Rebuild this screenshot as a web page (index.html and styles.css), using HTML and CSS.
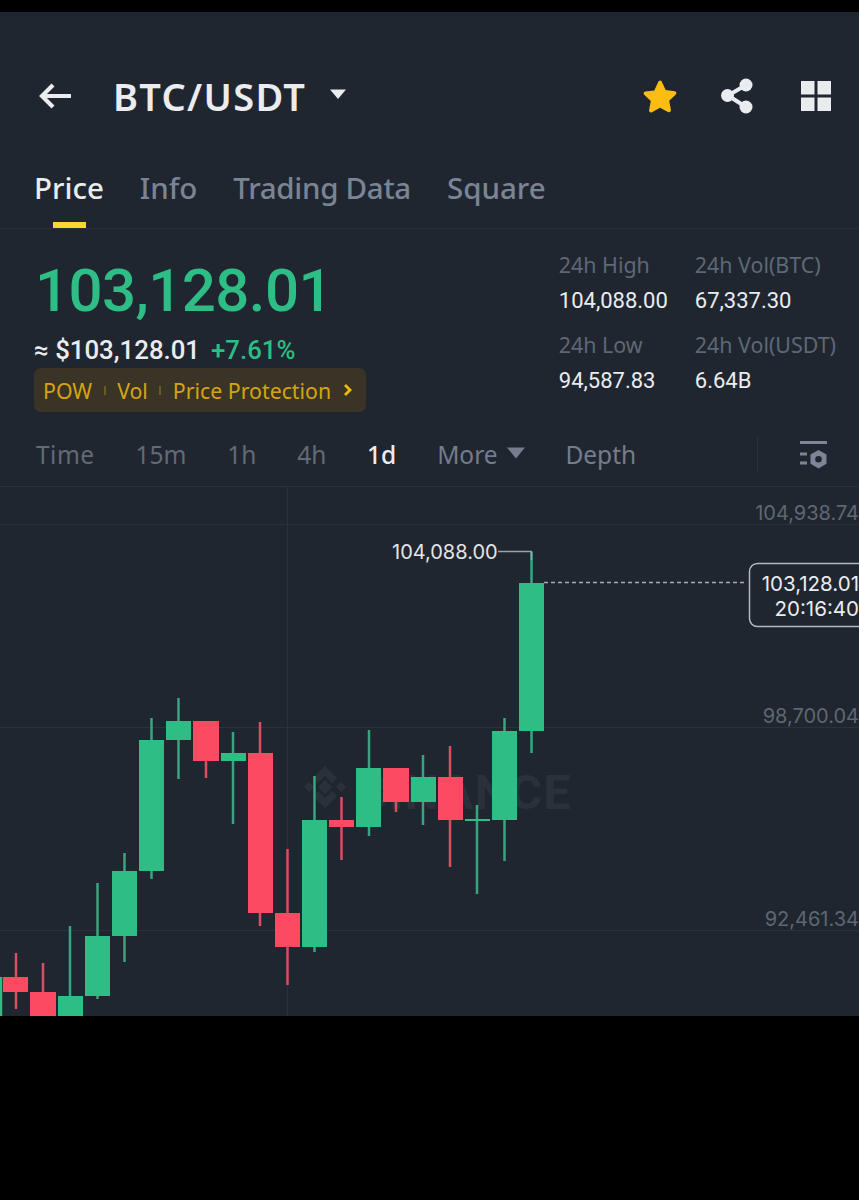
FILE: index.html
```html
<!DOCTYPE html>
<html lang="en">
<head>
  <meta charset="UTF-8">
  <meta name="viewport" content="width=device-width, initial-scale=1.0">
  <title>BTC/USDT</title>
  <link rel="stylesheet" href="styles.css">
</head>
<body>
  <div class="screen">
    <header class="topbar">
      <svg class="back-icon" viewBox="0 0 36 28"><path d="M33 14H5M15 3 4 14l11 11" fill="none" stroke="currentColor" stroke-width="4.2"/></svg>
      <span class="pair">BTC/USDT</span>
      <svg class="pair-caret" viewBox="0 0 18 12"><path d="M1 1.500h16L9 11z" fill="currentColor"/></svg>
      <div class="topbar-icons">
        <svg class="star-icon" viewBox="0 0 36 36"><path d="M18 2.500c.9 0 1.400.5 1.800 1.300l3.900 8.300 9 1.200c1.700.2 2.300 2 1.100 3.200l-6.600 6.300 1.700 9c.3 1.700-1.400 2.900-2.900 2.100L18 29.800l-8 4.400c-1.500.8-3.200-.4-2.900-2.100l1.700-9-6.600-6.300c-1.200-1.200-.6-3 1.100-3.200l9-1.200 3.900-8.300c.4-.8.900-1.300 1.800-1.300z" fill="currentColor"/></svg>
        <svg class="share-icon" viewBox="0 0 34 36"><path d="M26 7 8 17.500 26 29" fill="none" stroke="currentColor" stroke-width="4"/><circle cx="26" cy="7" r="6.500" fill="currentColor"/><circle cx="7.500" cy="17.500" r="6.500" fill="currentColor"/><circle cx="26" cy="29" r="6.500" fill="currentColor"/></svg>
        <svg class="grid-icon" viewBox="0 0 32 32"><path d="M1 1h13.500v13.500H1zM17.500 1H31v13.500H17.500zM1 17.500h13.500V31H1zM17.500 17.500H31V31H17.500z" fill="currentColor"/></svg>
      </div>
    </header>

    <nav class="tabs">
      <span class="tab tab-active">Price</span>
      <span class="tab">Info</span>
      <span class="tab tab-long">Trading Data</span>
      <span class="tab">Square</span>
    </nav>

    <section class="summary">
      <div class="summary-left">
        <div class="last-price">103,128.01</div>
        <div class="fiat-row">
          <span class="fiat">≈ $103,128.01</span>
          <span class="change">+7.61%</span>
        </div>
        <div class="tags">
          <span>POW</span>
          <i class="tag-sep"></i>
          <span>Vol</span>
          <i class="tag-sep"></i>
          <span>Price Protection</span>
          <svg class="tag-arrow" viewBox="0 0 10 14"><path d="M2 2l5 5-5 5" fill="none" stroke="currentColor" stroke-width="2.800"/></svg>
        </div>
      </div>
      <div class="stats">
        <div class="stat"><span class="stat-label">24h High</span><span class="stat-value">104,088.00</span></div>
        <div class="stat"><span class="stat-label">24h Vol(BTC)</span><span class="stat-value">67,337.30</span></div>
        <div class="stat"><span class="stat-label">24h Low</span><span class="stat-value">94,587.83</span></div>
        <div class="stat"><span class="stat-label">24h Vol(USDT)</span><span class="stat-value">6.64B</span></div>
      </div>
    </section>

    <div class="intervals">
      <span class="interval interval-time">Time</span>
      <span class="interval">15m</span>
      <span class="interval">1h</span>
      <span class="interval">4h</span>
      <span class="interval interval-active">1d</span>
      <span class="interval interval-more">More <svg class="more-caret" viewBox="0 0 18 12"><path d="M0 .5h18L9 11.500z" fill="currentColor"/></svg></span>
      <span class="interval interval-more">Depth</span>
      <i class="interval-sep"></i>
      <svg class="settings-icon" viewBox="0 0 30 30"><path d="M1 1.500h27M1 13h7M1 22h7" fill="none" stroke="currentColor" stroke-width="3.200"/><path d="M19.500 9l8 4.600v9.200l-8 4.600-8-4.600v-9.200z" fill="currentColor"/><circle cx="19.500" cy="18.200" r="3.300" fill="#1f2630"/></svg>
    </div>

    <div class="chart">
      <!-- viewBox keeps the screenshot's y values, so candles read as page coordinates -->
      <svg class="chart-svg" viewBox="0 487 859 529">
        <g class="grid-lines">
          <path d="M0 524.500H859M0 727.500H859M0 930.500H859M287.500 487V1016"/>
        </g>
        <g class="watermark">
          <path d="M325 766l12 12-5 5-7-7-7 7-5-5zM304 787l5-5 5 5-5 5zM346 787l-5-5-5 5 5 5zM325 780l7 7-7 7-7-7zM325 808l-12-12 5-5 7 7 7-7 5 5z"/>
          <text x="357" y="809" class="watermark-text">BINANCE</text>
        </g>

        <g class="wicks-up">
          <path d="M1 977V1016M70 926V1016M97.500 883V999M124.500 853V962M151.500 718V879M178.500 698V779M233 732V824M314.500 776V952M369 730V836M423 755V825M477 805V894M504.500 718V861M531.500 552V753"/>
        </g>
        <g class="wicks-down">
          <path d="M16 953V1009M43 963V1016M206 721V778M260 722V926M287.500 849V985M341.500 797V860M396 768V812M450 746V867"/>
        </g>
        <g class="bodies-up">
          <rect x="-11" y="977" width="13" height="39"/>
          <rect x="58" y="996" width="25" height="20"/>
          <rect x="85" y="936" width="25" height="60"/>
          <rect x="112" y="871" width="25" height="65"/>
          <rect x="139" y="740" width="25" height="131"/>
          <rect x="166" y="721" width="25" height="19"/>
          <rect x="221" y="753" width="25" height="8"/>
          <rect x="302" y="820" width="25" height="127"/>
          <rect x="356" y="768" width="25" height="59"/>
          <rect x="411" y="777" width="25" height="25"/>
          <rect x="465" y="819" width="25" height="2"/>
          <rect x="492" y="731" width="25" height="89"/>
          <rect x="519" y="583" width="25" height="148"/>
        </g>
        <g class="bodies-down">
          <rect x="3" y="977" width="25" height="15"/>
          <rect x="30" y="992" width="26" height="24"/>
          <rect x="193" y="721" width="26" height="40"/>
          <rect x="248" y="753" width="25" height="160"/>
          <rect x="275" y="913" width="25" height="34"/>
          <rect x="329" y="820" width="25" height="7"/>
          <rect x="383" y="768" width="26" height="34"/>
          <rect x="438" y="777" width="25" height="43"/>
        </g>

        <path class="high-leader" d="M498 551.500H531.500V560"/>
        <path class="last-line" d="M544 582.500H745"/>
        <text x="392" y="559" class="high-label">104,088.00</text>

        <text x="859" y="520" class="axis-label">104,938.74</text>
        <text x="859" y="723" class="axis-label">98,700.04</text>
        <text x="859" y="926" class="axis-label">92,461.34</text>

        <rect class="price-tag" x="749.500" y="563.500" width="130" height="63" rx="8"/>
        <text x="859" y="591" class="tag-label">103,128.01</text>
        <text x="859" y="616" class="tag-label">20:16:40</text>
      </svg>
    </div>
  </div>
</body>
</html>
```

FILE: styles.css
```css
:root {
  --fundo: #1f2630;
  --linha: #2b323c;
  --branco: #eaecef;
  --verde: #2ebd85;
  --amarelo: #f0b90b;
}
* { box-sizing: border-box; margin: 0; padding: 0; }
body {
  background: #000;
  font-family: "Noto Sans", Arial, sans-serif;
  color: var(--branco);
  height: 1200px;
  overflow: hidden;
}
.screen {
  margin-top: 12px;
  height: 1004px;
  background: var(--fundo);
  display: flex;
  flex-direction: column;
}
.topbar {
  display: flex;
  align-items: center;
  height: 168px;
  padding: 0 27px 0 38px;
}
.back-icon { width: 36px; height: 28px; color: var(--branco); }
.pair {
  margin-left: 39px;
  font-size: 38px;
  font-weight: 600;
  letter-spacing: 1.300px;
}
.pair-caret { width: 18px; height: 12px; margin-left: 23px; margin-bottom: 4px; color: var(--branco); }
.topbar-icons { margin-left: auto; display: flex; align-items: center; gap: 43px; }
.star-icon { width: 36px; height: 36px; margin-right: -1px; color: #fcbc11; }
.share-icon { width: 34px; height: 36px; margin-right: 3px; color: var(--branco); }
.grid-icon { width: 32px; height: 32px; color: var(--branco); }

.tabs {
  display: flex;
  gap: 36px;
  height: 60px;
  margin-top: -11px;
  padding-left: 34px;
  border-bottom: 1px solid var(--linha);
}
.tab {
  position: relative;
  font-size: 29.500px;
  line-height: 38px;
  font-weight: 500;
  color: #7b8494;
}
.tab-long { letter-spacing: -0.300px; }
.tab-active { color: var(--branco); }
.tab-active::after {
  content: "";
  position: absolute;
  left: 19px;
  bottom: 0;
  width: 33px;
  height: 6px;
  background: #fcd535;
}

.summary {
  display: flex;
  justify-content: space-between;
  height: 200px;
  padding: 24px 23px 0 34px;
}
.last-price {
  margin-left: 1px;
  font-family: Roboto, Arial, sans-serif;
  font-size: 60px;
  line-height: 76px;
  font-weight: 500;
  letter-spacing: -0.6px;
  color: var(--verde);
}
.fiat-row {
  display: flex;
  gap: 11px;
  margin-top: 5px;
  font-family: Roboto, Arial, sans-serif;
  font-size: 25.800px;
  line-height: 32px;
  font-weight: 500;
}
.fiat { color: var(--branco); }
.change { color: var(--verde); }
.tags {
  display: flex;
  align-items: center;
  gap: 11.500px;
  width: 332px;
  height: 44px;
  margin-top: 2px;
  padding-left: 9px;
  border-radius: 7px;
  background: #3a3426;
  color: #d6a410;
  font-size: 21.300px;
}
.tag-sep { width: 2px; height: 9px; background: #6a5a26; }
.tag-arrow { width: 10px; height: 14px; color: var(--amarelo); }

.stats {
  display: grid;
  grid-template-columns: 136px auto;
  row-gap: 16px;
  align-content: start;
  margin-top: -2px;
}
.stat { display: flex; flex-direction: column; gap: 8px; }
.stat-label { font-size: 21.400px; line-height: 28px; color: #5f6875; }
.stat-value {
  font-family: Roboto, Arial, sans-serif;
  font-size: 22px;
  line-height: 28px;
  color: var(--branco);
}

.intervals {
  display: flex;
  align-items: center;
  gap: 40.800px;
  height: 58px;
  padding: 0 30px 6px 36px;
  border-bottom: 1px solid var(--linha);
}
.interval { font-size: 24.500px; color: #626a76; }
.interval-time { letter-spacing: 0.5px; }
.interval-active { color: var(--branco); font-weight: 500; }
.interval-more { color: #747c8e; display: flex; align-items: center; gap: 9px; }
.more-caret { width: 18px; height: 12px; margin-bottom: 4px; }
.interval-sep { width: 1px; height: 36px; margin-left: auto; background: var(--linha); }
.settings-icon { width: 30px; height: 30px; margin-top: 3px; color: #7d8597; }

.chart { flex: 1; overflow: hidden; }
.chart-svg { display: block; width: 859px; height: 529px; }
.grid-lines path { stroke: var(--linha); stroke-width: 1; fill: none; }
.watermark path { fill: #2a313b; }
.watermark-text { font-family: Roboto, Arial, sans-serif; font-size: 49px; font-weight: 700; fill: #2a313b; letter-spacing: 1px; }
.wicks-up path { stroke: #38a57f; stroke-width: 2.500; fill: none; }
.wicks-down path { stroke: #d94f60; stroke-width: 2.500; fill: none; }
.bodies-up rect { fill: var(--verde); }
.bodies-down rect { fill: #fb4a62; }
.high-leader { fill: none; stroke: #9aa3a6; stroke-width: 1.500; }
.last-line { fill: none; stroke: #a9aeb4; stroke-width: 1.500; stroke-dasharray: 4 3; }
.high-label { font-family: Inter, Arial, sans-serif; font-size: 20px; fill: #e3e5e8; }
.axis-label { font-family: Inter, Arial, sans-serif; font-size: 20px; fill: #5f6772; text-anchor: end; }
.price-tag { fill: var(--fundo); stroke: #b5b9be; stroke-width: 1.500; }
.tag-label { font-family: Inter, Arial, sans-serif; font-size: 20.500px; fill: #eaecef; text-anchor: end; }
```
